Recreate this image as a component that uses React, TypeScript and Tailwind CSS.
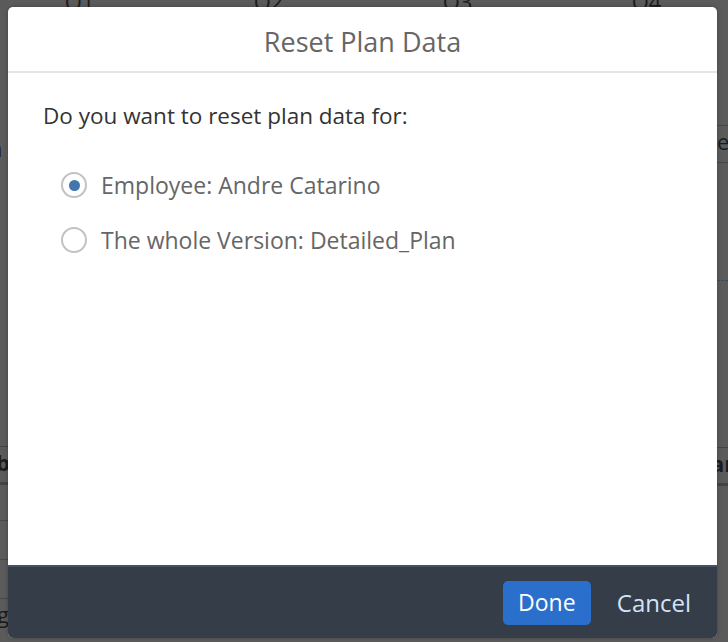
import React, { useState } from 'react';

const FONT = '"Open Sans", "Liberation Sans", Arial, sans-serif';

function Radio({ checked }: { checked: boolean }) {
  return (
    <span className="flex h-[26px] w-[26px] shrink-0 items-center justify-center rounded-full border-2 border-[#c2c2c2] bg-white">
      {checked && <span className="h-[11px] w-[11px] rounded-full bg-[#4276ad]" />}
    </span>
  );
}

// the dimmed page that peeks out around the dialog
function Backdrop() {
  return (
    <div className="absolute inset-0 flex flex-col text-[22px] text-[#1c1c1c]">
      <div className="-mt-[14px] ml-[-15px] grid shrink-0 grid-cols-[repeat(4,189px)] leading-[30px]">
        <span className="text-center">Q1</span>
        <span className="text-center">Q2</span>
        <span className="text-center">Q3</span>
        <span className="text-center">Q4</span>
      </div>
      <div className="flex flex-1 justify-between">
        <div className="flex w-[8px] flex-col overflow-hidden leading-[30px]">
          <div className="h-[117px] shrink-0" />
          <div className="-ml-[18px] h-[30px] shrink-0">m</div>
          <div className="h-[284px] shrink-0 border-b border-[#454545]" />
          <div className="-ml-[4px] h-[38px] shrink-0 border-b-[3px] border-[#444] font-bold">b</div>
          <div className="h-[36px] shrink-0 border-b border-[#474747]" />
          <div className="h-[39px] shrink-0 border-b border-[#474747]" />
          <div className="h-[39px] shrink-0 border-b border-[#474747]" />
          <div className="-ml-[3px] shrink-0">g</div>
        </div>
        <div className="flex w-[11px] flex-col overflow-hidden leading-[30px]">
          <div className="h-[110px] shrink-0 border-b border-[#474747]" />
          <div className="h-[37px] shrink-0 border-b border-[#474747]">e</div>
          <div className="h-[118px] shrink-0 border-b border-dashed border-[#3f4a55]" />
          <div className="h-[167px] shrink-0 border-b border-[#454545]" />
          <div className="-ml-[6px] h-[38px] shrink-0 border-b-[3px] border-[#444] font-bold">ar</div>
        </div>
      </div>
    </div>
  );
}

export default function App() {
  const [choice, setChoice] = useState<'employee' | 'version'>('employee');

  const options = [
    { id: 'employee' as const, label: 'Employee: Andre Catarino' },
    { id: 'version' as const, label: 'The whole Version: Detailed_Plan' },
  ];

  return (
    <div className="relative h-[642px] w-[728px] overflow-hidden bg-[#5b5b5b]" style={{ fontFamily: FONT }}>
      <Backdrop />

      {/* dialog */}
      <div className="absolute left-[8px] top-[7px] flex h-[631px] w-[709px] flex-col overflow-hidden rounded-[5px] bg-white shadow-[0_0_4px_rgba(0,0,0,0.25)]">
        <header className="flex h-[66px] shrink-0 items-center justify-center border-b-2 border-[#e5e5e5] pt-[4px]">
          <h1 className="text-[27px] leading-none text-[#666666]">Reset Plan Data</h1>
        </header>

        <div className="flex-1 px-[35px] pt-[28px]">
          <p className="text-[22.5px] leading-[30px] text-[#333333]">Do you want to reset plan data for:</p>
          <div className="mt-[39px] flex flex-col gap-[25px] pl-[18px]">
            {options.map((o) => (
              <button
                key={o.id}
                type="button"
                onClick={() => setChoice(o.id)}
                className="flex items-center gap-[14px] text-left"
              >
                <Radio checked={choice === o.id} />
                <span className="text-[23px] leading-[30px] text-[#666666]">{o.label}</span>
              </button>
            ))}
          </div>
        </div>

        <footer className="flex h-[73px] shrink-0 items-center justify-end gap-[14px] border-t-2 border-[#465260] bg-[#343d48] pr-[14px]">
          <button
            type="button"
            className="h-[44px] w-[88px] rounded-[5px] bg-[#2b6fcd] text-[23px] text-white"
          >
            Done
          </button>
          <button type="button" className="h-[44px] px-[12px] text-[24px] text-[#d1e4f9]">
            Cancel
          </button>
        </footer>
      </div>
    </div>
  );
}
